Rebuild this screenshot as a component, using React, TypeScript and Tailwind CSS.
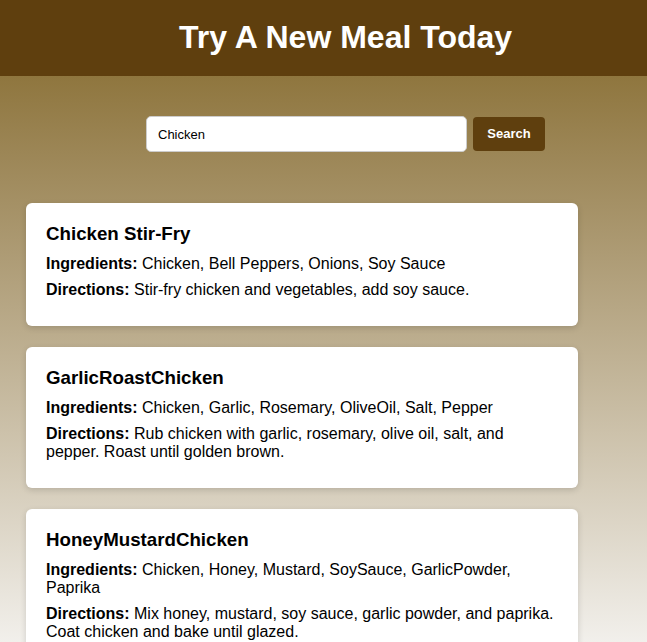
const meals = [
  {
    name: "Chicken Stir-Fry",
    ingredients: "Chicken, Bell Peppers, Onions, Soy Sauce",
    directions: "Stir-fry chicken and vegetables, add soy sauce.",
  },
  {
    name: "GarlicRoastChicken",
    ingredients: "Chicken, Garlic, Rosemary, OliveOil, Salt, Pepper",
    directions:
      "Rub chicken with garlic, rosemary, olive oil, salt, and pepper. Roast until golden brown.",
  },
  {
    name: "HoneyMustardChicken",
    ingredients: "Chicken, Honey, Mustard, SoySauce, GarlicPowder, Paprika",
    directions:
      "Mix honey, mustard, soy sauce, garlic powder, and paprika. Coat chicken and bake until glazed.",
  },
];

export default function App() {
  return (
    <div className="min-h-screen font-['Liberation_Sans',Arial,sans-serif] text-black">
      {/* Header */}
      <header className="h-[76px] bg-[#5f3f0e] flex items-center justify-center pl-[44px]">
        <h1 className="text-[32px] font-bold text-white leading-none -mt-[2px]">
          Try A New Meal Today
        </h1>
      </header>

      <main className="bg-gradient-to-b from-[#8f763e] to-[#fafafa] pt-[40px] pb-[20px]">
        {/* Search */}
        <div className="flex items-center justify-center gap-[6px] pl-[44px]">
          <input
            type="text"
            defaultValue="Chicken"
            className="w-[321px] h-[36px] px-[11px] text-[13px] bg-white border border-[#cccccc] rounded-[5px] outline-none"
          />
          <button className="w-[72px] h-[34px] bg-[#5f3f0e] text-white text-[13px] font-bold rounded-[4px]">
            Search
          </button>
        </div>

        {/* Results */}
        <div className="mt-[51px] ml-[26px] w-[552px] flex flex-col gap-[21px]">
          {meals.map((meal) => (
            <div
              key={meal.name}
              className="bg-white rounded-[6px] px-[20px] pt-[20px] pb-[19px] shadow-[0_2px_6px_rgba(0,0,0,0.15)]"
            >
              <h3 className="text-[18.72px] leading-[21px] font-bold mb-[11px]">
                {meal.name}
              </h3>
              <p className="text-[16px] leading-[18px] mb-[8px]">
                <strong>Ingredients:</strong> {meal.ingredients}
              </p>
              <p className="text-[16px] leading-[18px] mb-[8px]">
                <strong>Directions:</strong> {meal.directions}
              </p>
            </div>
          ))}
        </div>
      </main>
    </div>
  );
}
